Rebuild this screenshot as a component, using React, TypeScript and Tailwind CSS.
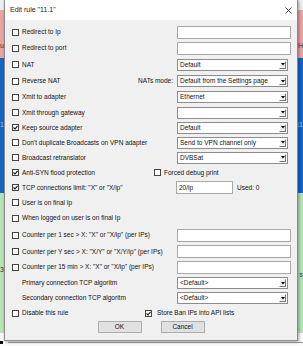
import React from 'react';

function Check({ checked }: { checked?: boolean }) {
  return (
    <span className="w-[7px] h-[7px] shrink-0 border border-[#444] bg-white flex items-center justify-center">
      {checked && (
        <svg width="5" height="5" viewBox="0 0 5 5">
          <path d="M0.5 2.5 L2 4 L4.5 0.8" stroke="#111" strokeWidth="1.1" fill="none" />
        </svg>
      )}
    </span>
  );
}

function Box({ label, checked }: { label: string; checked?: boolean }) {
  return (
    <div className="flex items-center">
      <Check checked={checked} />
      <span className="ml-[3px] whitespace-nowrap">{label}</span>
    </div>
  );
}

function Input({ value = '', w = 'w-[114px]' }: { value?: string; w?: string }) {
  return (
    <div className={`${w} h-[13px] bg-white border border-[#a9a9a9] flex items-center pl-[2px]`}>{value}</div>
  );
}

function Select({ value = '' }: { value?: string }) {
  return (
    <div className="w-[111px] h-[12px] bg-white border border-[#8c8c8c] flex items-center pl-[2px]">
      <span className="flex-1 whitespace-nowrap">{value}</span>
      <span className="w-[7px] h-[8px] mr-[1px] bg-[#f0f0f0] border-r border-b border-[#777] border-t border-l border-t-[#fff] border-l-[#fff] flex items-center justify-center">
        <svg width="4" height="3" viewBox="0 0 4 3">
          <path d="M0 0 H4 L2 2.5 Z" fill="#000" />
        </svg>
      </span>
    </div>
  );
}

export default function App() {
  return (
    <div className="relative w-[303px] h-[346px] overflow-hidden font-['Liberation_Sans',Arial,sans-serif] text-[6.5px] text-[#111]">
      {/* page behind the dialog */}
      <div className="flex flex-col h-full text-[7px]">
        <div className="h-[10px] bg-[#eeeeee]" />
        <div className="h-[48px] bg-[#e9a4a4] flex justify-between items-end pb-[7px] text-[#333]">
          <span>u</span>
          <span>H</span>
        </div>
        <div className="h-[135px] bg-[#1266c4] flex justify-between items-center text-[#9cc3ee]">
          <span>11</span>
          <span>11</span>
        </div>
        <div className="h-[140px] bg-[#b5e5b5] flex justify-between items-center text-[#333]">
          <span className="pt-[14px]">3.</span>
          <span className="pt-[24px]">s</span>
        </div>
        <div className="flex-1 bg-[#fafafa] flex items-end pb-[2px]">
          <span className="w-[3px] h-[3px] bg-black" />
          <span className="flex-1 h-[1px] bg-[#999] ml-[5px] mb-[1px]" />
        </div>
      </div>

      {/* dialog window */}
      <div className="absolute left-[4px] top-0 w-[294px] h-[341px] border border-t-0 border-[#8a8a8a] bg-[#f0f0f0] shadow-[1px_1px_3px_rgba(0,0,0,0.35)] flex flex-col">
        <div className="h-[20px] bg-white flex items-center justify-between pl-[5px] pr-[5px] text-[7px] text-[#222]">
          <span>Edit rule "11.1"</span>
          <svg width="7" height="7" viewBox="0 0 7 7">
            <path d="M0.5 0.5 L6.5 6.5 M6.5 0.5 L0.5 6.5" stroke="#333" strokeWidth="0.9" />
          </svg>
        </div>

        <div className="flex flex-col pt-[4px] pl-[7px]">
          <div className="flex items-center h-[16px]">
            <div className="w-[165px]"><Box label="Redirect to Ip" /></div>
            <Input />
          </div>
          <div className="flex items-center h-[16px]">
            <div className="w-[165px]"><Box label="Redirect to port" /></div>
            <Input />
          </div>
          <div className="flex items-center h-[17px]">
            <div className="w-[165px]"><Box label="NAT" /></div>
            <Select value="Default" />
          </div>
          <div className="flex items-center h-[16px]">
            <div className="w-[165px] flex items-center justify-between pr-[4px]">
              <Box label="Reverse NAT" />
              <span>NATs mode:</span>
            </div>
            <Select value="Default from the Settings page" />
          </div>
          <div className="flex items-center h-[16px]">
            <div className="w-[165px]"><Box label="Xmit to adapter" /></div>
            <Select value="Ethernet" />
          </div>
          <div className="flex items-center h-[15px]">
            <div className="w-[165px]"><Box label="Xmit through gateway" /></div>
            <Select />
          </div>
          <div className="flex items-center h-[15px]">
            <div className="w-[165px]"><Box label="Keep source adapter" checked /></div>
            <Select value="Default" />
          </div>
          <div className="flex items-center h-[15px]">
            <div className="w-[165px]"><Box label="Don't duplicate Broadcasts on VPN adapter" /></div>
            <Select value="Send to VPN channel only" />
          </div>
          <div className="flex items-center h-[15px]">
            <div className="w-[165px]"><Box label="Broadcast retranslator" /></div>
            <Select value="DVBSat" />
          </div>
          <div className="flex items-center h-[15px]">
            <div className="w-[142px]"><Box label="Anti-SYN flood protection" checked /></div>
            <Box label="Forced debug print" />
          </div>
          <div className="flex items-center h-[15px]">
            <div className="w-[164px]"><Box label={'TCP connections limit: "X" or "X/ip"'} checked /></div>
            <Input value="20/ip" w="w-[57px]" />
            <span className="ml-[4px]">Used: 0</span>
          </div>
          <div className="flex items-center h-[15px]">
            <Box label="User is on final Ip" />
          </div>
          <div className="flex items-center h-[16px]">
            <Box label="When logged on user is on final Ip" />
          </div>
          <div className="flex items-center h-[18px]">
            <div className="w-[165px]"><Box label={'Counter per 1 sec > X: "X" or "X/ip" (per IPs)'} /></div>
            <Input />
          </div>
          <div className="flex items-center h-[15px]">
            <div className="w-[165px]"><Box label={'Counter per Y sec > X: "X/Y" or "X/Y/ip" (per IPs)'} /></div>
            <Input />
          </div>
          <div className="flex items-center h-[16px]">
            <div className="w-[165px]"><Box label={'Counter per 15 min > X: "X" or "X/ip" (per IPs)'} /></div>
            <Input />
          </div>
          <div className="flex items-center h-[16px]">
            <div className="w-[165px] pl-[10px]">Primary connection TCP algoritm</div>
            <Select value="<Default>" />
          </div>
          <div className="flex items-center h-[14px]">
            <div className="w-[165px] pl-[10px]">Secondary connection TCP algoritm</div>
            <Select value="<Default>" />
          </div>
          <div className="flex items-center h-[16px]">
            <div className="w-[133px]"><Box label="Disable this rule" /></div>
            <div className="flex items-center">
              <Check checked />
              <span className="ml-[5px]">Store Ban IPs into API lists</span>
            </div>
          </div>
          <div className="flex justify-center gap-[19px] pr-[7px]">
            <button className="w-[44px] h-[12px] bg-[#e1e1e1] border border-[#adadad] flex items-center justify-center">OK</button>
            <button className="w-[44px] h-[12px] bg-[#e1e1e1] border border-[#adadad] flex items-center justify-center">Cancel</button>
          </div>
        </div>
      </div>
    </div>
  );
}
